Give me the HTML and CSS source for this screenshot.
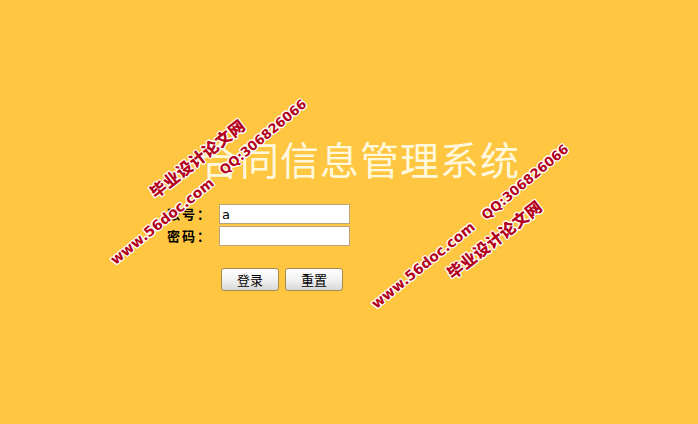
FILE: index.html
```html
<!DOCTYPE html>
<html lang="zh-CN">
  <head>
    <meta charset="UTF-8" />
    <title>合同信息管理系统</title>
    <link rel="stylesheet" href="styles.css">
  </head>
  <body>
    <div class="page">
      <h1 class="titulo">合同信息管理系统</h1>
      <form class="login">
        <label class="etiqueta" for="usuario">账号：</label>
        <input class="campo" id="usuario" type="text" value="a">
        <label class="etiqueta" for="clave">密码：</label>
        <input class="campo" id="clave" type="password">
        <div class="botones">
          <button type="button" class="boton">登录</button>
          <button type="reset" class="boton">重置</button>
        </div>
      </form>
    </div>

    <span class="marca cn" style="left:197px;top:158px">毕业设计论文网</span>
    <span class="marca qq" style="left:263px;top:137px">QQ:306826066</span>
    <span class="marca web" style="left:162px;top:221px">www.56doc.com</span>
    <span class="marca qq" style="left:525px;top:182px">QQ:306826066</span>
    <span class="marca web" style="left:423px;top:265px">www.56doc.com</span>
    <span class="marca cn" style="left:494px;top:239px">毕业设计论文网</span>
  </body>
</html>
```

FILE: styles.css
```css
body {
  margin: 0;
  background-color: #ffc641;
  font-family: "Liberation Sans", "Noto Sans CJK SC", sans-serif;
  height: 424px;
  overflow: hidden;
}

.page {
  padding-top: 134px;
}

.titulo {
  margin: 0;
  padding-left: 200px;
  font-family: "Noto Sans CJK SC", sans-serif;
  font-weight: 400;
  font-size: 39px;
  line-height: 48px;
  letter-spacing: 1px;
  color: #fff8dc;
}

.login {
  display: grid;
  grid-template-columns: 212px 130px;
  column-gap: 7px;
  row-gap: 2px;
  margin-top: 22px;
}

.etiqueta {
  text-align: right;
  font-family: "Noto Sans CJK SC", sans-serif;
  font-weight: bold;
  font-size: 13px;
  line-height: 20px;
  color: #000;
  letter-spacing: 2px;
}

.campo {
  box-sizing: border-box;
  width: 131px;
  height: 20px;
  margin: 0;
  padding: 0 2px;
  border: 1px solid #b9a57c;
  background: #fff;
  font-family: "DejaVu Sans", sans-serif;
  font-size: 13px;
}

.botones {
  grid-column: 2;
  display: flex;
  gap: 6px;
  margin-top: 20px;
  padding-left: 2px;
}

.boton {
  width: 58px;
  height: 23px;
  border: 1px solid #a88a4c;
  border-radius: 3px;
  background: linear-gradient(#ffffff, #f2f2f2 50%, #d8d8d8);
  font-family: "Noto Sans CJK SC", sans-serif;
  font-size: 13px;
  color: #000;
  padding: 0;
}

.marca {
  position: absolute;
  transform: translate(-50%, -50%) rotate(-38deg);
  white-space: nowrap;
  font-weight: bold;
  color: #b3001b;
  text-shadow: 1px 0 #fff, -1px 0 #fff, 0 1px #fff, 0 -1px #fff,
    1px 1px #fff, -1px -1px #fff, 1px -1px #fff, -1px 1px #fff;
}

.cn {
  font-family: "Noto Sans CJK SC", sans-serif;
  font-weight: 900;
  font-size: 16px;
  letter-spacing: 0.5px;
}

.qq {
  font-family: "DejaVu Sans", sans-serif;
  font-size: 13px;
  transform: translate(-50%, -50%) rotate(-40deg);
}

.web {
  font-family: "DejaVu Sans", sans-serif;
  font-size: 14px;
  transform: translate(-50%, -50%) rotate(-39deg);
}
```
